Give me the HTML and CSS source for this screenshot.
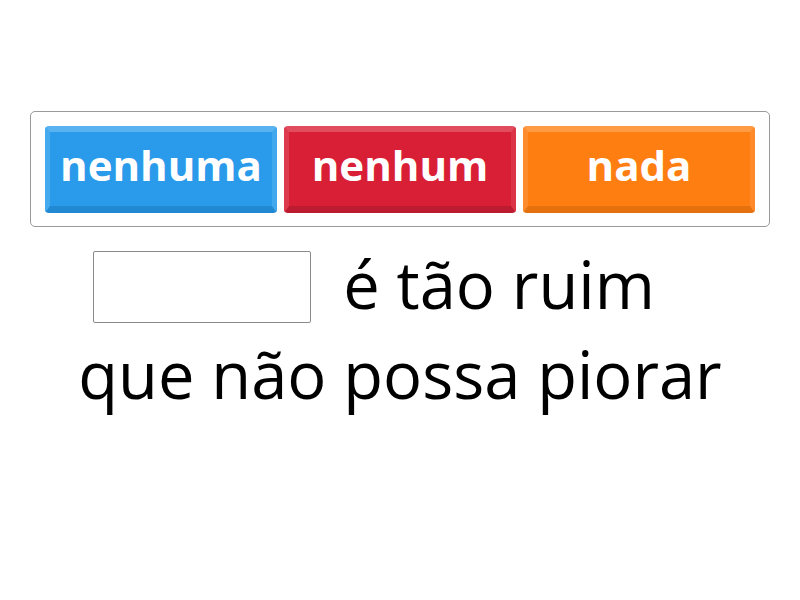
FILE: index.html
```html
<!DOCTYPE html>
<html>
<head>
<meta charset="utf-8">
<link rel="stylesheet" href="styles.css">
</head>
<body>
<div class="page">
  <div class="options">
    <div class="tile blue">nenhuma</div>
    <div class="tile red">nenhum</div>
    <div class="tile orange">nada</div>
  </div>
  <div class="sentence">
    <div class="line line-first"><span class="blank"></span><span class="words">é tão ruim</span></div>
    <div class="line">que não possa piorar</div>
  </div>
</div>
</body>
</html>
```
FILE: styles.css
```css
html, body {
  margin: 0;
  padding: 0;
  background: #ffffff;
}
body {
  font-family: "Open Sans", "Liberation Sans", sans-serif;
  color: #000;
}
.page {
  width: 800px;
  height: 600px;
  padding-top: 111px;
  box-sizing: border-box;
}
.options {
  margin: 0 30px;
  border: 1px solid #9a9a9a;
  border-radius: 5px;
  padding: 14px 14px 13px 14px;
  display: flex;
  gap: 7px;
}
.tile {
  flex: 1;
  height: 87px;
  box-sizing: border-box;
  border-radius: 4px;
  border-style: solid;
  border-width: 6px 5px 7px 5px;
  color: #fff;
  font-weight: 700;
  font-size: 42px;
  display: flex;
  align-items: center;
  justify-content: center;
  padding-bottom: 9px;
}
.blue {
  background: #2a9aea;
  border-color: #5ab3f0 #42a8ee #2188d2 #46aaee;
}
.red {
  background: #d91f36;
  border-color: #e14d5f #dc3447 #bd1c30 #de3a4d;
}
.orange {
  background: #ff7e12;
  border-color: #ff9a45 #ff8a2a #e5700e #ff8c2c;
}
.sentence {
  margin-top: 12px;
  font-size: 65px;
  line-height: 90px;
  text-align: center;
}
.line {
  display: flex;
  justify-content: center;
  align-items: center;
  white-space: pre;
}
.line-first {
  padding-right: 52px;
}
.blank {
  display: inline-block;
  width: 218px;
  height: 72px;
  box-sizing: border-box;
  border: 1px solid #8a8a8a;
  border-radius: 2px;
  margin-right: 32px;
  margin-top: 6px;
}
```
